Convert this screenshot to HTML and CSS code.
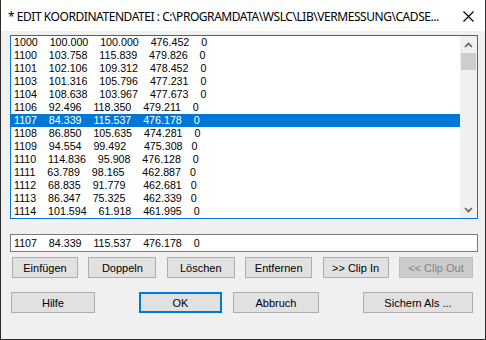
FILE: index.html
```html
<!DOCTYPE html>
<html lang="de">
<head>
  <meta charset="UTF-8">
  <title>Edit Koordinatendatei</title>
  <link rel="stylesheet" href="styles.css">
</head>
<body>

  <div class="window">
    <!-- Title bar -->
    <div class="titlebar">
      <span class="title">* EDIT KOORDINATENDATEI : C:\PROGRAMDATA\WSLC\LIB\VERMESSUNG\CADSE...</span>
      <svg class="close" width="11" height="11" viewBox="0 0 11 11">
        <path d="M0.5 0.5 L10.5 10.5 M10.5 0.5 L0.5 10.5" stroke="#000" stroke-width="1.1" fill="none"/>
      </svg>
    </div>

    <div class="content">
      <!-- Coordinate list -->
      <div class="listbox">
        <div class="rows">
          <div class="row">1000    100.000    100.000    476.452    0</div>
          <div class="row">1100    103.758    115.839    479.826    0</div>
          <div class="row">1101    102.106    109.312    478.452    0</div>
          <div class="row">1103    101.316    105.796    477.231    0</div>
          <div class="row">1104    108.638    103.967    477.673    0</div>
          <div class="row">1106    92.496    118.350    479.211    0</div>
          <div class="row selected">1107    84.339    115.537    476.178    0</div>
          <div class="row">1108    86.850    105.635    474.281    0</div>
          <div class="row">1109    94.554    99.492      475.308   0</div>
          <div class="row">1110    114.836    95.908    476.128    0</div>
          <div class="row">1111    63.789    98.165      462.887   0</div>
          <div class="row">1112    68.835    91.779      462.681   0</div>
          <div class="row">1113    86.347    75.325      462.339   0</div>
          <div class="row">1114    101.594    61.918    461.995    0</div>
        </div>
        <div class="scrollbar">
          <div class="arrow">
            <svg width="9" height="6" viewBox="0 0 9 6"><path d="M1 5 L4.5 1.5 L8 5" stroke="#606060" stroke-width="1.6" fill="none"/></svg>
          </div>
          <div class="thumb"></div>
          <div class="track"></div>
          <div class="arrow">
            <svg width="9" height="6" viewBox="0 0 9 6"><path d="M1 1 L4.5 4.5 L8 1" stroke="#606060" stroke-width="1.6" fill="none"/></svg>
          </div>
        </div>
      </div>

      <!-- Edit field -->
      <div class="editfield">1107    84.339    115.537    476.178    0</div>

      <!-- Edit buttons -->
      <div class="edit-buttons">
        <button class="btn w66">Einfügen</button>
        <button class="btn w68">Doppeln</button>
        <button class="btn w68">Löschen</button>
        <button class="btn w67">Entfernen</button>
        <button class="btn w66">&gt;&gt; Clip In</button>
        <button class="btn w74" disabled>&lt;&lt; Clip Out</button>
      </div>

      <!-- Dialog buttons -->
      <div class="dialog-buttons">
        <button class="btn hilfe">Hilfe</button>
        <button class="btn ok">OK</button>
        <button class="btn abbruch">Abbruch</button>
        <button class="btn sichern">Sichern Als ...</button>
      </div>
    </div>
  </div>

</body>
</html>
```

FILE: styles.css
```css
body {
  margin: 0;
  font-family: "Liberation Sans", Arial, sans-serif;
}

.window {
  width: 486px;
  height: 340px;
  box-sizing: border-box;
  border: 1px solid #2b2b2b;
  border-top: none;
  background-color: #f0f0f0;
  display: flex;
  flex-direction: column;
}

/* Title bar */
.titlebar {
  height: 31px;
  background-color: #fff;
  display: flex;
  align-items: center;
  padding-left: 7px;
  padding-top: 1px;
  box-sizing: border-box;
}

.title {
  font-family: "Noto Sans", sans-serif;
  font-size: 12px;
  letter-spacing: -0.45px;
  color: #000;
  white-space: nowrap;
  overflow: hidden;
  flex: 1;
}

.close {
  flex-shrink: 0;
  margin-right: 11px;
}

.content {
  padding: 4px 7px 0 9px;
}

/* List box */
.listbox {
  height: 184px;
  box-sizing: border-box;
  border: 1px solid #0078d7;
  background-color: #fff;
  display: flex;
}

.rows {
  flex: 1;
}

.row {
  height: 13px;
  line-height: 13px;
  padding-left: 3px;
  font-size: 10.7px;
  white-space: pre;
  color: #000;
}

.row.selected {
  background-color: #0078d7;
  color: #fff;
}

.scrollbar {
  width: 17px;
  background-color: #f0f0f0;
  display: flex;
  flex-direction: column;
}

.arrow {
  height: 17px;
  display: flex;
  align-items: center;
  justify-content: center;
}

.thumb {
  height: 17px;
  margin: 0 1px;
  background-color: #cdcdcd;
}

.track {
  flex: 1;
}

/* Edit field */
.editfield {
  margin-top: 15px;
  height: 18px;
  box-sizing: border-box;
  border: 1px solid #7a7a7a;
  background-color: #fff;
  padding-left: 3px;
  font-size: 10.7px;
  line-height: 16px;
  white-space: pre;
}

/* Buttons */
.btn {
  height: 21px;
  box-sizing: border-box;
  border: 1px solid #adadad;
  background-color: #e1e1e1;
  font-family: "Liberation Sans", Arial, sans-serif;
  font-size: 11px;
  color: #000;
  padding: 0;
  margin: 0;
}

.btn:disabled {
  background-color: #cccccc;
  border-color: #bfbfbf;
  color: #838383;
}

.edit-buttons {
  margin-top: 5px;
  padding: 0 5px 0 2px;
  display: flex;
  justify-content: space-between;
}

.w66 { width: 66px; }
.w67 { width: 67px; }
.w68 { width: 68px; }
.w74 { width: 74px; }

.dialog-buttons {
  margin-top: 14px;
  padding-left: 1px;
  display: flex;
}

.hilfe {
  width: 84px;
}

.ok {
  width: 83px;
  margin-left: 44px;
  border: 2px solid #0078d7;
}

.abbruch {
  width: 86px;
  margin-left: 11px;
}

.sichern {
  width: 110px;
  margin-left: 44px;
}
```
